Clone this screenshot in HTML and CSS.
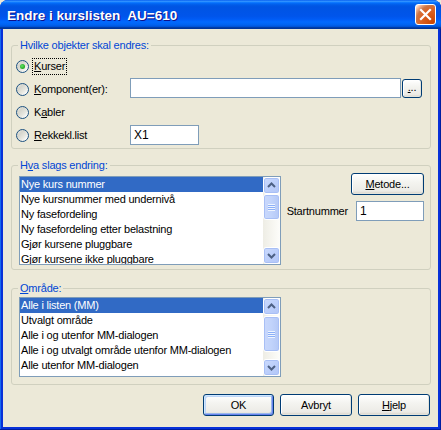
FILE: index.html
```html
<!DOCTYPE html>
<html lang="no">
<head>
<meta charset="utf-8">
<title>Endre i kurslisten</title>
<link rel="stylesheet" href="styles.css">
</head>
<body>
<div class="window">
  <div class="titlebar">
    <span class="title">Endre i kurslisten&nbsp; AU=610</span>
    <span class="close"><svg width="13" height="13" viewBox="0 0 13 13"><path d="M2 2 L11 11 M11 2 L2 11" stroke="#fff" stroke-width="2.2" stroke-linecap="square"/></svg></span>
  </div>
  <div class="client">
    <fieldset class="group g1">
      <legend>Hvilke objekter skal endres:</legend>
      <div class="opts">
        <div class="opt"><span class="radio checked"></span><span class="lbl focus"><u>K</u>urser</span></div>
        <div></div>
        <div class="opt"><span class="radio"></span><span class="lbl"><u>K</u>omponent(er):</span></div>
        <div class="inrow"><span class="textbox comp"></span><span class="btn dots"><u>.</u>..</span></div>
        <div class="opt"><span class="radio"></span><span class="lbl">K<u>a</u>bler</span></div>
        <div></div>
        <div class="opt"><span class="radio"></span><span class="lbl"><u>R</u>ekkekl.list</span></div>
        <div class="inrow"><span class="textbox rekk">X1</span></div>
      </div>
    </fieldset>

    <fieldset class="group g2">
      <legend>H<u>v</u>a slags endring:</legend>
      <div class="g2body">
        <div class="listbox lb1">
          <ul class="items">
            <li class="sel">Nye kurs nummer</li>
            <li>Nye kursnummer med undernivå</li>
            <li>Ny fasefordeling</li>
            <li>Ny fasefordeling etter belastning</li>
            <li>Gjør kursene pluggbare</li>
            <li>Gjør kursene ikke pluggbare</li>
          </ul>
          <div class="scrollbar">
            <span class="sbtn"><svg width="15" height="15" viewBox="0 0 15 15"><path d="M4 9 L7.5 5.5 L11 9" fill="none" stroke="#4d6185" stroke-width="2"/></svg></span>
            <div class="track t1"><span class="thumb th1"><span class="grip"></span></span></div>
            <span class="sbtn"><svg width="15" height="15" viewBox="0 0 15 15"><path d="M4 6 L7.5 9.5 L11 6" fill="none" stroke="#4d6185" stroke-width="2"/></svg></span>
          </div>
        </div>
        <div class="side">
          <span class="btn metode"><u>M</u>etode...</span>
          <div class="startrow"><span class="slbl">Startnummer</span><span class="textbox start">1</span></div>
        </div>
      </div>
    </fieldset>

    <fieldset class="group g3">
      <legend><u>O</u>mråde:</legend>
      <div class="listbox lb2">
        <ul class="items">
          <li class="sel">Alle i listen (MM)</li>
          <li>Utvalgt område</li>
          <li>Alle i og utenfor MM-dialogen</li>
          <li>Alle i og utvalgt område utenfor MM-dialogen</li>
          <li>Alle utenfor MM-dialogen</li>
        </ul>
        <div class="scrollbar">
          <span class="sbtn"><svg width="15" height="15" viewBox="0 0 15 15"><path d="M4 9 L7.5 5.5 L11 9" fill="none" stroke="#4d6185" stroke-width="2"/></svg></span>
          <div class="track t2"><span class="thumb th2"><span class="grip"></span></span></div>
          <span class="sbtn"><svg width="15" height="15" viewBox="0 0 15 15"><path d="M4 6 L7.5 9.5 L11 6" fill="none" stroke="#4d6185" stroke-width="2"/></svg></span>
        </div>
      </div>
    </fieldset>

    <div class="buttons">
      <span class="btn default">OK</span>
      <span class="btn">Avbryt</span>
      <span class="btn"><u>H</u>jelp</span>
    </div>
  </div>
</div>
</body>
</html>
```

FILE: styles.css
```css
html, body {
  margin: 0;
  padding: 0;
  background: #ece9d8;
}
body {
  font-family: "Liberation Sans", Arial, sans-serif;
  font-size: 11px;
  letter-spacing: -0.2px;
  color: #000;
}
u { text-decoration: underline; text-underline-offset: 1px; }

.window {
  width: 441px;
  height: 430px;
  box-sizing: border-box;
  display: flex;
  flex-direction: column;
  background: #0831d9;
  border-radius: 8px 8px 0 0;
  padding: 0 3px 3px 3px;
  box-shadow: inset -1px -1px #001ea0, inset 1px 1px #166aee;
}

.titlebar {
  height: 29px;
  margin: 0 -3px;
  padding: 0 7px 0 7px;
  display: flex;
  align-items: center;
  justify-content: space-between;
  border-radius: 8px 8px 0 0;
  background: linear-gradient(to bottom, #0058ee 0%, #3593ff 4%, #288eff 6%, #127dff 8%, #036ffc 10%, #0262ee 14%, #0057e5 20%, #0054e3 24%, #0055eb 56%, #005bf5 66%, #026afe 76%, #0062ef 86%, #0052d6 92%, #0040ab 94%, #003092 100%);
}
.title {
  color: #fff;
  font-weight: bold;
  font-size: 13.5px;
  letter-spacing: 0;
  text-shadow: 1px 1px #0f1089;
  margin-top: 1px;
}
.close {
  width: 21px;
  height: 21px;
  box-sizing: border-box;
  border: 1px solid #fff;
  border-radius: 3px;
  margin-right: -2px;
  display: flex;
  align-items: center;
  justify-content: center;
  background: radial-gradient(circle at 90% 90%, #cc4600 0%, #dc6527 55%, #cd7546 70%, #ffccb2 90%, #fff 100%);
}

.client {
  flex: 1;
  background: #ece9d8;
  padding: 9px 7px 0 8px;
  display: flex;
  flex-direction: column;
}

.group {
  margin: 0;
  padding: 0;
  border: 1px solid #d0d0bf;
  border-radius: 3px;
  box-sizing: border-box;
  min-width: 0;
}
.group legend {
  color: #0046d5;
  line-height: 14px;
  padding: 0 2px;
  margin-left: 6px;
}
.group legend u { text-decoration-color: #0046d5; }

.g1 { height: 111px; }
.g2 { height: 112px; margin-top: 9px; }
.g3 { height: 104px; margin-top: 11px; }

.opts {
  display: grid;
  grid-template-columns: 114px 1fr;
  grid-auto-rows: 23px;
  padding: 3px 0 0 4px;
}
.opt {
  display: flex;
  align-items: center;
}
.radio {
  width: 13px;
  height: 13px;
  box-sizing: border-box;
  border: 1px solid #1c5180;
  border-radius: 50%;
  background: linear-gradient(315deg, #fff 10%, #e6e6df 40%, #d5d5cd 70%, #f0f0ea 100%);
  display: flex;
  align-items: center;
  justify-content: center;
}
.radio.checked::after {
  content: "";
  width: 5px;
  height: 5px;
  border-radius: 50%;
  background: radial-gradient(circle at 40% 40%, #64e16a 0%, #28b028 60%, #1f8f1f 100%);
}
.lbl {
  margin-left: 3px;
  padding: 1px 1px;
  line-height: 13px;
  border: 1px dotted transparent;
}
.lbl.focus { border-color: #000; }

.inrow {
  display: flex;
  align-items: center;
  gap: 1px;
}
.textbox {
  box-sizing: border-box;
  height: 20px;
  border: 1px solid #7f9db9;
  background: #fff;
  padding: 0 3px;
  display: flex;
  align-items: center;
  font-size: 12px;
  letter-spacing: 0;
}
.comp { width: 271px; margin-top: -4px; }
.rekk { width: 69px; margin-top: -2px; }

.btn {
  box-sizing: border-box;
  border: 1px solid #003c74;
  border-radius: 3px;
  background: linear-gradient(to bottom, #fff 0%, #f4f4f0 40%, #ecebe6 85%, #d6d0c5 100%);
  display: flex;
  align-items: center;
  justify-content: center;
  box-shadow: inset -1px -1px #e3e3db, inset 1px 1px #fff;
}
.dots {
  width: 20px;
  height: 19px;
  margin-top: -3px;
  font-size: 11px;
  padding-bottom: 3px;
}

.g2body {
  display: flex;
  padding: 4px 0 0 7px;
}
.listbox {
  box-sizing: border-box;
  width: 262px;
  border: 1px solid #7f9db9;
  background: #fff;
  display: flex;
  overflow: hidden;
}
.lb1 { height: 89px; }
.lb2 { height: 80px; margin: 2px 0 0 7px; }
.items {
  list-style: none;
  margin: 0;
  padding: 0;
  flex: 1;
  overflow: hidden;
}
.items li {
  height: 15px;
  line-height: 15px;
  padding-left: 1px;
  white-space: nowrap;
}
.items li.sel {
  background: #316ac5;
  color: #fff;
}
.scrollbar {
  width: 17px;
  flex: none;
  display: flex;
  flex-direction: column;
  background: linear-gradient(to right, #eeede5, #fdfdfa);
}
.sbtn {
  width: 17px;
  height: 17px;
  box-sizing: border-box;
  border: 1px solid #fff;
  border-radius: 3px;
  background: linear-gradient(135deg, #cbdafd 0%, #bccffb 50%, #b2c6f7 100%);
  box-shadow: inset 0 0 0 1px #a8bff5;
  display: flex;
  align-items: center;
  justify-content: center;
  flex: none;
}
.track {
  flex: 1;
  display: flex;
  flex-direction: column;
}
.thumb {
  box-sizing: border-box;
  border: 1px solid #fff;
  border-radius: 3px;
  background: linear-gradient(to right, #c9d8fc 0%, #c1d3fb 50%, #b4c8f6 100%);
  box-shadow: inset 0 0 0 1px #a8bff5;
  display: flex;
  align-items: center;
  justify-content: center;
}
.th1 { height: 26px; margin-top: 0; }
.th2 { height: 36px; margin-top: 1px; }
.grip {
  width: 7px;
  height: 7px;
  background: repeating-linear-gradient(to bottom, #eef4fe 0 1px, #8cb0f8 1px 2px);
}

.side {
  flex: 1;
  display: flex;
  flex-direction: column;
  align-items: flex-end;
  padding-right: 6px;
  margin-top: -3px;
}
.metode {
  width: 73px;
  height: 22px;
}
.startrow {
  display: flex;
  align-items: center;
  margin-top: 6px;
  gap: 8px;
}
.start { width: 68px; }

.buttons {
  display: flex;
  justify-content: flex-end;
  gap: 6px;
  margin-top: 9px;
  padding-right: 1px;
}
.buttons .btn {
  width: 72px;
  height: 22px;
}
.buttons .default {
  width: 71px;
  box-shadow: inset -1px -1px #6982ee, inset 1px 1px #cee7ff, inset -2px -2px #98b8ea, inset 2px 2px #bcd4f6;
}
```
